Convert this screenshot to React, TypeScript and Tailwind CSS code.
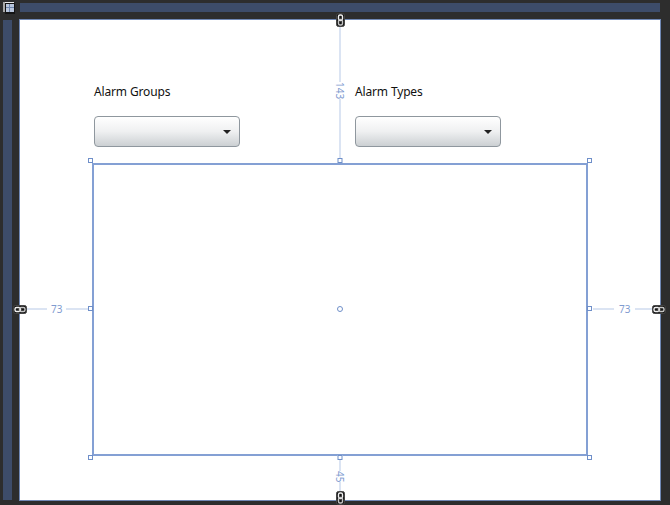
const Link = ({ vertical = false }: { vertical?: boolean }) => (
  <svg
    width={vertical ? 9 : 14}
    height={vertical ? 14 : 9}
    viewBox={vertical ? '0 0 9 14' : '0 0 14 9'}
    className="block"
  >
    <g transform={vertical ? 'rotate(90 4.5 4.5)' : undefined}>
      <rect x="0.5" y="0.5" width="13" height="8" rx="2" fill="#151515" stroke="#444" />
      <rect x="2" y="2.5" width="5.5" height="4" rx="1.5" fill="none" stroke="#f2f2f2" strokeWidth="1.4" />
      <rect x="6.5" y="2.5" width="5.5" height="4" rx="1.5" fill="none" stroke="#c4c4c4" strokeWidth="1.4" />
    </g>
  </svg>
);

const GridIcon = () => (
  <svg width="12" height="12" viewBox="0 0 12 12" className="block">
    <rect x="0" y="0" width="2" height="10" fill="#a8a8a8" />
    <rect x="2" y="0" width="9" height="1" fill="#e8e8e8" />
    <rect x="2" y="1" width="10" height="11" fill="#141414" />
    <rect x="3" y="2" width="8" height="8" fill="#b9c6dc" />
    <rect x="6" y="2" width="1" height="8" fill="#6f86ad" />
    <rect x="3" y="5" width="8" height="1" fill="#6f86ad" />
  </svg>
);

const Handle = ({ className }: { className: string }) => (
  <div className={`absolute w-[5px] h-[5px] border border-[#6f8fc9] bg-white ${className}`} />
);

const Combo = () => (
  <div className="w-[146px] h-[31px] rounded-[4px] border border-[#8f979e] bg-gradient-to-b from-[#ffffff] via-[#eff0f1] to-[#ccd0d3] flex items-center justify-end pr-[8px]">
    <div className="w-0 h-0 border-x-[4px] border-x-transparent border-t-[4px] border-t-[#222]" />
  </div>
);

const Field = ({ label }: { label: string }) => (
  <div className="w-[261px]">
    <div className="h-[16px] leading-[16px] text-[12px] tracking-[-0.15px] text-[#111]">{label}</div>
    <div className="mt-[16px]">
      <Combo />
    </div>
  </div>
);

export default function App() {
  return (
    <div
      className="relative w-[670px] h-[505px] overflow-hidden bg-[#2d2d2d] grid grid-cols-[19px_642px] grid-rows-[19px_482px] font-['Noto_Sans',sans-serif]"
    >
      {/* corner grid button */}
      <div className="p-[3px] pt-[2px]">
        <GridIcon />
      </div>
      {/* top ruler */}
      <div className="pt-[3px] pl-[1px] pr-[1px]">
        <div className="h-[9px] bg-[#3d4c69]" />
      </div>
      {/* left ruler */}
      <div className="pl-[3px] pr-[7px] pt-[1px] pb-[1px]">
        <div className="h-full bg-[#3d4c69]" />
      </div>

      {/* canvas */}
      <div className="relative bg-white border border-[#7088b4] pl-[74px] pt-[64px]">
        <div className="flex h-[79px]">
          <Field label="Alarm Groups" />
          <Field label="Alarm Types" />
        </div>

        {/* selected element */}
        <div className="relative w-[496px] h-[293px] border-2 border-[#84a0d4] -ml-[2px]">
          <Handle className="-left-[6px] -top-[7px]" />
          <Handle className="-right-[6px] -top-[7px]" />
          <Handle className="-left-[6px] -bottom-[6px]" />
          <Handle className="-right-[6px] -bottom-[6px]" />
          <Handle className="left-1/2 -translate-x-1/2 -top-[7px]" />
          <Handle className="left-1/2 -translate-x-1/2 -bottom-[6px]" />
          <Handle className="-left-[6px] top-[141px]" />
          <Handle className="-right-[6px] top-[141px]" />
          <div className="absolute left-1/2 top-[141px] -translate-x-1/2 w-[6px] h-[6px] rounded-full border border-[#6f8fc9] bg-white" />

          {/* top margin adorner */}
          <div className="absolute left-1/2 -translate-x-1/2 -top-[144px] h-[137px] flex flex-col items-center w-[20px]">
            <div className="w-[2px] h-[61px] bg-[#dbe4f3]" />
            <div className="[writing-mode:vertical-rl] text-[10px] leading-[10px] text-[#7f9bd0] py-[2px]">143</div>
            <div className="w-[2px] flex-1 bg-[#dbe4f3]" />
          </div>

          {/* bottom margin adorner */}
          <div className="absolute left-1/2 -translate-x-1/2 -bottom-[37px] h-[31px] flex flex-col items-center w-[20px]">
            <div className="w-[2px] h-[11px] bg-[#dbe4f3]" />
            <div className="[writing-mode:vertical-rl] text-[10px] leading-[10px] text-[#7f9bd0] py-[2px]">45</div>
            <div className="w-[2px] flex-1 bg-[#dbe4f3]" />
          </div>

          {/* left margin adorner */}
          <div className="absolute top-[139px] -left-[74px] w-[68px] flex items-center">
            <div className="h-[2px] w-[27px] bg-[#dbe4f3]" />
            <div className="text-[10px] leading-[10px] text-[#7f9bd0] px-[4px]">73</div>
            <div className="h-[2px] flex-1 bg-[#dbe4f3]" />
          </div>

          {/* right margin adorner */}
          <div className="absolute top-[139px] -right-[72px] w-[65px] flex items-center">
            <div className="h-[2px] w-[21px] bg-[#dbe4f3]" />
            <div className="text-[10px] leading-[10px] text-[#7f9bd0] px-[5px]">73</div>
            <div className="h-[2px] flex-1 bg-[#dbe4f3]" />
          </div>
        </div>
      </div>

      {/* margin lock icons */}
      <div className="absolute left-[336px] top-[13px]"><Link vertical /></div>
      <div className="absolute left-[336px] top-[491px]"><Link vertical /></div>
      <div className="absolute left-[13px] top-[305px]"><Link /></div>
      <div className="absolute left-[652px] top-[305px]"><Link /></div>
    </div>
  );
}
